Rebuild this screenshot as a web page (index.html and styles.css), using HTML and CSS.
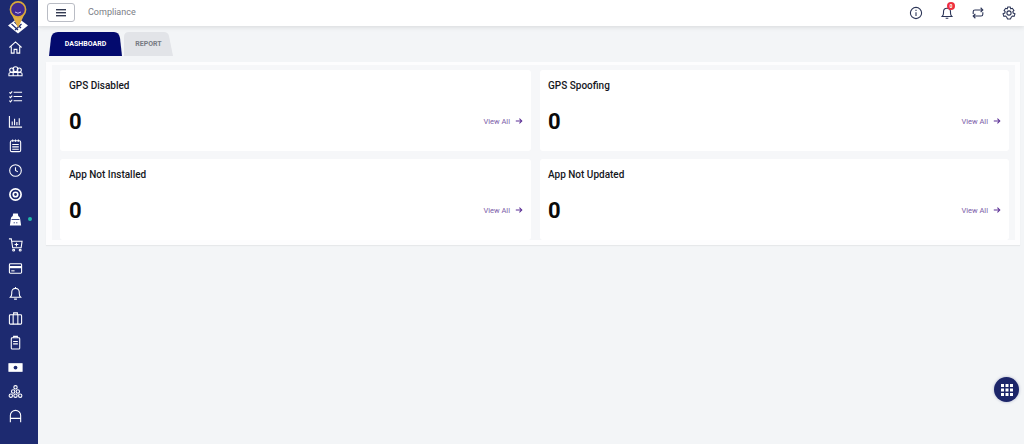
FILE: index.html
```html
<!DOCTYPE html>
<html lang="en">
<head>
<meta charset="utf-8">
<title>Compliance</title>
<link rel="stylesheet" href="styles.css">
</head>
<body>
<div class="app">
  <nav class="side">
    <div class="logo">
      <svg width="24" height="35" viewBox="0 0 24 35">
        <path d="M12 18 L22 25.5 L12 33.5 L2 25.5Z" fill="#fff"/>
        <path d="M5.5 24 L12 30 M8.5 22 L15 28 M9 30 L15.5 24" stroke="#1d2a70" stroke-width="1.2" fill="none"/>
        <path d="M5 13 L12 28 L19 13Z" fill="#e0ad45"/>
        <circle cx="12" cy="9.5" r="7.6" fill="#3f2a92" stroke="#d9a93a" stroke-width="1.6"/>
        <path d="M9 12 Q12 14.5 15 12" stroke="#c9b6ee" stroke-width="1" fill="none"/>
      </svg>
    </div>
    <ul class="menu">
      <li class="item"><svg class="ni" viewBox="0 0 16 16"><path d="M1.5 8 L8 2 L14.5 8 M3.5 7 V14 H6.5 V10 H9.5 V14 H12.5 V7"/></svg></li>
      <li class="item"><svg class="ni" viewBox="0 0 16 16"><circle cx="4" cy="6.5" r="2.2"/><circle cx="8" cy="5.5" r="2.6"/><circle cx="12" cy="6.5" r="2.2"/><path d="M1 12.5 V10.5 Q1 9 3 9 H13 Q15 9 15 10.5 V12.5 H1Z M5.5 9 V12.5 M10.5 9 V12.5"/></svg></li>
      <li class="item"><svg class="ni" viewBox="0 0 16 16"><path d="M6 3.5 H15 M6 8 H15 M6 12.5 H15 M1.5 3.5 L2.7 4.7 L4.5 2.5 M1.5 8 L2.7 9.2 L4.5 7 M1.5 12.5 L2.7 13.7 L4.5 11.5"/></svg></li>
      <li class="item"><svg class="ni" viewBox="0 0 16 16"><path d="M1.5 2 V14 H15 M4.5 12 V8 M7 12 V5 M9.5 12 V8.5 M12 12 V4.5"/></svg></li>
      <li class="item"><svg class="ni" viewBox="0 0 16 16"><rect x="2.5" y="3" width="11" height="11.5" rx="1.5"/><path d="M5 1.5 V4 M8 1.5 V4 M11 1.5 V4 M4.5 7 H11.5 M4.5 9.5 H11.5 M4.5 12 H11.5"/></svg></li>
      <li class="item"><svg class="ni" viewBox="0 0 16 16"><circle cx="8" cy="8" r="6.2"/><path d="M8 4.5 V8 L10.5 9.5"/></svg></li>
      <li class="item"><svg class="ni ni-bold" viewBox="0 0 16 16"><circle cx="8" cy="8" r="6"/><circle cx="8" cy="8" r="2.4"/></svg></li>
      <li class="item"><svg class="ni ni-fill" viewBox="0 0 16 16"><path d="M5.5 1.5 H10.5 L11 4.5 H11.5 Q13 5.5 13 7.5 L14 14.5 H2 L3 7.5 Q3 5.5 4.5 4.5 H5 Z"/><path class="ni-cut" d="M3.8 8 H12.2 M6 11.5 H7.3 M8.7 11.5 H10"/></svg><span class="dot"></span></li>
      <li class="item"><svg class="ni" viewBox="0 0 16 16"><path d="M1 2 H3.5 L5 11.5 H14 L15 4.5 H4 M7 8 H11 M9 6 V10"/><circle cx="6" cy="14" r="1"/><circle cx="13" cy="14" r="1"/></svg></li>
      <li class="item"><svg class="ni" viewBox="0 0 16 16"><rect x="1.5" y="3" width="13" height="10" rx="1"/><path d="M1.5 6.5 H14.5" stroke-width="2.4"/><path d="M3.5 10.5 H7"/></svg></li>
      <li class="item"><svg class="ni" viewBox="0 0 16 16"><path d="M2.5 12 Q4 10.5 4 8 V6.5 A4 4 0 0 1 12 6.5 V8 Q12 10.5 13.5 12Z M6.5 14 H9.5 M8 1 V2.5"/></svg></li>
      <li class="item"><svg class="ni" viewBox="0 0 16 16"><rect x="1.5" y="4" width="13" height="10" rx="1"/><path d="M5.5 4 V14 M10.5 4 V14 M6 4 V2 H10 V4"/></svg></li>
      <li class="item"><svg class="ni" viewBox="0 0 16 16"><rect x="3.5" y="3" width="9" height="12" rx="1"/><path d="M6 3 V1.5 H10 V3 M5.5 7 H10.5 M5.5 9.5 H10.5"/></svg></li>
      <li class="item"><svg class="ni" viewBox="0 0 16 16"><rect x="1" y="4" width="14" height="8" fill="#fff"/><circle cx="8" cy="8" r="2" fill="#1d2a70" stroke="none"/></svg></li>
      <li class="item"><svg class="ni" viewBox="0 0 16 16"><circle cx="8" cy="3.5" r="1.8"/><circle cx="5.5" cy="8" r="1.8"/><circle cx="10.5" cy="8" r="1.8"/><circle cx="3" cy="12.5" r="1.8"/><circle cx="8" cy="12.5" r="1.8"/><circle cx="13" cy="12.5" r="1.8"/></svg></li>
      <li class="item"><svg class="ni" viewBox="0 0 16 16"><path d="M2.5 14 V7 A5.5 5.5 0 0 1 13.5 7 V14 M2.5 10 H13.5"/></svg></li>
    </ul>
  </nav>
  <div class="main">
    <header class="top">
      <button class="burger" type="button" aria-label="Menu"><span></span><span></span><span></span></button>
      <span class="crumb">Compliance</span>
      <div class="tools">
        <svg class="ti" viewBox="0 0 16 16"><circle cx="8" cy="8" r="6.4"/><path d="M8 7 V11.5 M8 4.3 V5.7"/></svg>
        <span class="bell">
          <svg class="ti" viewBox="0 0 16 16"><path d="M2.5 12 Q4 10.5 4 8 V6.5 A4 4 0 0 1 12 6.5 V8 Q12 10.5 13.5 12Z M6.5 14 H9.5"/></svg>
          <b class="badge">0</b>
        </span>
        <svg class="ti" viewBox="0 0 16 16"><path d="M2.5 9 V6.5 Q2.5 4.5 4.5 4.5 H13.5 M11 2 L13.5 4.5 L11 7 M13.5 7 V9.5 Q13.5 11.5 11.5 11.5 H2.5 M5 9 L2.5 11.5 L5 14"/></svg>
        <svg class="ti" viewBox="0 0 16 16"><path d="M6.6 1.2 H9.4 L10 3.2 L11.8 2.6 L13.6 5 L12.4 6.4 L12.8 8 L14.8 9 L13.8 11.8 L11.8 11.4 L10.6 12.8 L9.6 14.8 H6.4 L5.4 12.8 L4.2 11.4 L2.2 11.8 L1.2 9 L3.2 8 L3.6 6.4 L2.4 5 L4.2 2.6 L6 3.2Z"/><circle cx="8" cy="8" r="2.4"/></svg>
      </div>
    </header>
    <div class="tabs">
      <a class="tab tab-on">DASHBOARD</a>
      <a class="tab tab-off">REPORT</a>
    </div>
    <section class="panel">
      <div class="grid">
        <article class="card">
          <h2 class="title">GPS Disabled</h2>
          <div class="row"><span class="num">0</span><a class="link">View All <svg class="arrow" viewBox="0 0 10 10"><path d="M1 5 H8.5 M5.5 2 L8.5 5 L5.5 8"/></svg></a></div>
        </article>
        <article class="card">
          <h2 class="title">GPS Spoofing</h2>
          <div class="row"><span class="num">0</span><a class="link">View All <svg class="arrow" viewBox="0 0 10 10"><path d="M1 5 H8.5 M5.5 2 L8.5 5 L5.5 8"/></svg></a></div>
        </article>
        <article class="card">
          <h2 class="title">App Not Installed</h2>
          <div class="row"><span class="num">0</span><a class="link">View All <svg class="arrow" viewBox="0 0 10 10"><path d="M1 5 H8.5 M5.5 2 L8.5 5 L5.5 8"/></svg></a></div>
        </article>
        <article class="card">
          <h2 class="title">App Not Updated</h2>
          <div class="row"><span class="num">0</span><a class="link">View All <svg class="arrow" viewBox="0 0 10 10"><path d="M1 5 H8.5 M5.5 2 L8.5 5 L5.5 8"/></svg></a></div>
        </article>
      </div>
    </section>
  </div>
</div>
<button class="fab" type="button" aria-label="Apps">
  <svg width="12" height="12" viewBox="0 0 12 12" fill="#fff"><rect x="0" y="0" width="3" height="3"/><rect x="4.5" y="0" width="3" height="3"/><rect x="9" y="0" width="3" height="3"/><rect x="0" y="4.5" width="3" height="3"/><rect x="4.5" y="4.5" width="3" height="3"/><rect x="9" y="4.5" width="3" height="3"/><rect x="0" y="9" width="3" height="3"/><rect x="4.5" y="9" width="3" height="3"/><rect x="9" y="9" width="3" height="3"/></svg>
</button>
</body>
</html>
```
FILE: styles.css
```css
* { box-sizing: border-box; }
html, body { margin: 0; height: 100%; overflow: hidden; }
body { background: #f3f5f7; font-family: Roboto, "Liberation Sans", sans-serif; color: #111; }
.app { display: flex; height: 444px; }
.side { width: 38px; flex: none; background: #1d2a70; display: flex; flex-direction: column; }
.logo { height: 35px; width: 36px; display: flex; justify-content: center; overflow: hidden; }
.menu { list-style: none; margin: 0; padding: 0; width: 100%; }
.item { height: 24.62px; display: flex; align-items: center; justify-content: center; position: relative; margin-left: -7px; }
.ni { width: 15px; height: 15px; fill: none; stroke: #fff; stroke-width: 1.15; }
.ni-bold { stroke-width: 1.8; }
.ni-fill { fill: #fff; stroke: none; }
.ni-cut { fill: none; stroke: #1d2a70; stroke-width: .9; }
.dot { position: absolute; left: 35px; top: 10px; width: 4px; height: 4px; border-radius: 50%; background: #20b8a8; }
.main { flex: 1; min-width: 0; display: flex; flex-direction: column; }
.top { height: 26px; background: #fff; display: flex; align-items: center; padding-left: 9px; box-shadow: 0 1px 5px rgba(0,0,0,.12); position: relative; }
.burger { width: 28px; height: 19px; margin-top: -2px; background: #fff; border: 1px solid #b9bcc4; border-radius: 3px; padding: 0; display: flex; flex-direction: column; align-items: center; justify-content: center; gap: 2px; }
.burger span { display: block; width: 10px; height: 1px; background: #333a52; box-shadow: 0 .4px 0 #333a52; }
.crumb { margin-left: 13px; margin-top: -3px; font-size: 9px; color: #7a7d85; }
.tools { margin-left: auto; margin-right: 8px; display: flex; align-items: center; gap: 17px; }
.ti { width: 14px; height: 14px; fill: none; stroke: #2c3557; stroke-width: 1.25; display: block; }
.bell { position: relative; display: block; }
.badge { position: absolute; left: 7px; top: -4px; width: 8px; height: 8px; border-radius: 50%; background: #ee2f3f; color: #fff; font-size: 5px; line-height: 8px; text-align: center; font-weight: 700; }
.tabs { display: flex; gap: 2px; padding: 6px 0 0 11px; height: 30px; align-items: flex-end; }
.tab { height: 24px; display: flex; align-items: center; justify-content: center; font-size: 7px; font-weight: 700; }
.tab-on { width: 73px; background: #030a6e; color: #fff; clip-path: path("M0 24 L2 6 Q3 0 9 0 H65 Q70 0 71 6 L73 24Z"); }
.tab-off { width: 49px; color: #777b83; background: #e2e4e8; clip-path: path("M0 24 V5 Q0 0 5 0 H40 Q44 0 45 4 L49 24Z"); }
.panel { margin: 6px 4px 0 8px; height: 183px; background: #fdfdfe; padding: 3px 5px 0 6px; box-shadow: 0 1px 1px rgba(0,0,0,.05); }
.grid { background: #f6f7f9; height: 175px; padding: 5px 6px 0 8px; display: grid; grid-template-columns: 471px 469px; column-gap: 9px; grid-template-rows: 81px 81px; row-gap: 8px; }
.card { background: #fff; border-radius: 3px; padding: 10px 8px 0 9px; }
.card:nth-child(even) { padding-left: 8px; }
.title { margin: 0; font-size: 10px; line-height: 12px; font-weight: 500; color: #15171c; }
.row { display: flex; justify-content: space-between; align-items: center; margin-top: 16px; }
.num { font-size: 22px; line-height: 28px; font-weight: 700; color: #0a0a0a; }
.link { display: flex; align-items: center; gap: 5px; margin-bottom: 2px; font-size: 7.5px; color: #7b5ca8; }
.arrow { width: 8px; height: 8px; fill: none; stroke: #5b2f95; stroke-width: 1.3; }
.fab { position: fixed; left: 994px; top: 377px; width: 25px; height: 25px; border-radius: 50%; border: 0; padding: 0; background: #1c2569; display: flex; align-items: center; justify-content: center; box-shadow: 0 0 3px rgba(40,50,120,.35); }
```
